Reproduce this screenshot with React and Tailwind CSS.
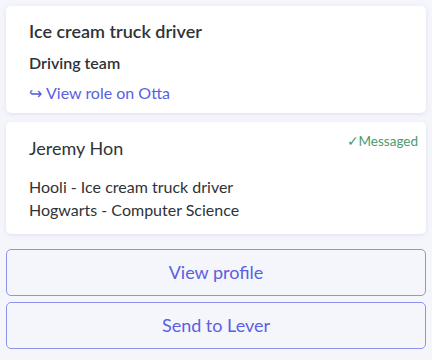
export default function App() {
  return (
    <div className="min-h-[360px] bg-[#f5f6fc] p-[6px] font-['Lato',sans-serif] text-[#2f3237]">
      {/* Role card */}
      <div className="rounded-[5px] bg-white px-[23px] pt-[13px] pb-[10px] shadow-[0_1px_4px_rgba(90,95,170,0.15)]">
        <div className="text-[18px] leading-[24px] font-semibold">Ice cream truck driver</div>
        <div className="mt-[10px] text-[16px] leading-[20px] font-semibold">Driving team</div>
        <a className="mt-[10px] flex items-center gap-[4px] text-[16px] leading-[20px] text-[#5a5fe3]" href="#">
          <span>↪</span>
          <span>View role on Otta</span>
        </a>
      </div>

      {/* Candidate card */}
      <div className="relative mt-[9px] rounded-[5px] bg-white px-[23px] pt-[14px] pb-[13px] shadow-[0_1px_4px_rgba(90,95,170,0.15)]">
        <div className="absolute top-[11px] right-[8px] text-[13.5px] leading-[16px] text-[#4d9a6c]">✓Messaged</div>
        <div className="text-[18px] leading-[24px]">Jeremy Hon</div>
        <div className="mt-[15px] text-[16px] leading-[23px]">
          <div>Hooli - Ice cream truck driver</div>
          <div>Hogwarts - Computer Science</div>
        </div>
      </div>

      {/* Actions */}
      <div className="mt-[15px] flex flex-col gap-[6px]">
        <button className="h-[47px] w-full rounded-[5px] border border-[#8d92ec] text-[18px] text-[#5a5fe3]">View profile</button>
        <button className="h-[47px] w-full rounded-[5px] border border-[#8d92ec] text-[18px] text-[#5a5fe3]">Send to Lever</button>
      </div>
    </div>
  )
}
